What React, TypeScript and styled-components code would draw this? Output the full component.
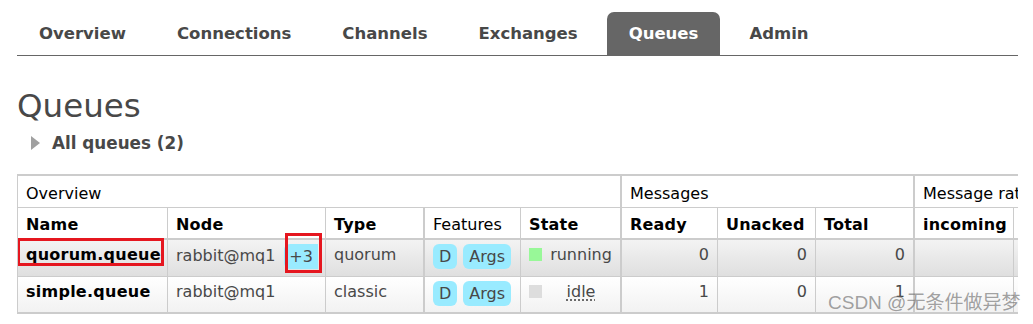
import styled, { createGlobalStyle } from 'styled-components'

const GlobalStyle = createGlobalStyle`
  body {
    margin: 0;
    background: #fff;
    font-family: "DejaVu Sans", Verdana, sans-serif;
    color: #484848;
  }
`

const Page = styled.div`
  position: relative;
  width: 1001px;
  padding: 12px 0 0 17px;
`

const Tabs = styled.nav`
  display: flex;
  gap: 7px;
  height: 43px;
  border-bottom: 1px solid #666;
`

const Tab = styled.a<{ $active?: boolean }>`
  padding: 0 22px;
  line-height: 44px;
  font-size: 16.5px;
  font-weight: bold;
  color: ${(p) => (p.$active ? '#fff' : '#484848')};
  background: ${(p) => (p.$active ? '#666' : 'transparent')};
  border-radius: 7px 7px 0 0;
`

const Title = styled.h1`
  margin: 30px 0 0;
  font-size: 32.5px;
  line-height: 40px;
  font-weight: normal;
  color: #484848;
`

const Toggle = styled.div`
  display: flex;
  align-items: center;
  gap: 12px;
  margin: 7px 0 0 14px;
  font-size: 16.8px;
  line-height: 20px;
  font-weight: bold;
  color: #484848;
`

const Arrow = styled.span`
  width: 0;
  height: 0;
  border-left: 9px solid #a0a0a0;
  border-top: 7px solid transparent;
  border-bottom: 7px solid transparent;
`

const Table = styled.div`
  margin-top: 21px;
  width: 1000px;
  overflow: hidden;
  border-top: 2px solid #ccc;
  border-bottom: 2px solid #ccc;
  border-left: 1px solid #ccc;
`

const COLS = '149px 158px 98px 97px 100px 97px 98px 98px 100px 100px'

type Kind = 'group' | 'head' | 'odd' | 'even'

const rowHeight: Record<Kind, number> = { group: 32, head: 32, odd: 37, even: 35 }
const rowBg: Record<Kind, string> = {
  group: '#fff',
  head: '#fff',
  odd: 'linear-gradient(#f3f3f3, #dfdfdf)',
  even: 'linear-gradient(#fff, #f2f2f2)',
}
const rowBorder: Record<Kind, string> = {
  group: '1px solid #ccc',
  head: '2px solid #ccc',
  odd: '1px solid #ccc',
  even: 'none',
}
const rowPad: Record<Kind, number> = { group: 7, head: 6, odd: 4, even: 4 }

const Row = styled.div<{ $kind: Kind }>`
  display: grid;
  grid-template-columns: ${COLS};
  width: 1095px;
  box-sizing: border-box;
  height: ${(p) => rowHeight[p.$kind]}px;
  background: ${(p) => rowBg[p.$kind]};
  border-bottom: ${(p) => rowBorder[p.$kind]};
  font-size: 16px;
  line-height: 21px;
  color: ${(p) => (p.$kind === 'group' || p.$kind === 'head' ? '#000' : '#484848')};
  font-weight: ${(p) => (p.$kind === 'head' ? 'bold' : 'normal')};
  letter-spacing: ${(p) => (p.$kind === 'head' ? '0.2px' : '0')};

  & > * {
    padding-top: ${(p) => rowPad[p.$kind]}px;
  }
`

const Cell = styled.div<{ $edge?: 0 | 1 | 2; $span?: number; $right?: boolean; $plain?: boolean }>`
  position: relative;
  box-sizing: border-box;
  padding-left: 8px;
  padding-right: 8px;
  white-space: nowrap;
  border-left: ${(p) => (p.$edge === 0 ? 'none' : `${p.$edge ?? 1}px solid #ccc`)};
  grid-column: span ${(p) => p.$span ?? 1};
  text-align: ${(p) => (p.$right ? 'right' : 'left')};
  ${(p) => (p.$plain ? 'font-weight: normal; letter-spacing: 0;' : '')}
`

const Name = styled.span`
  position: relative;
  display: inline-block;
  font-weight: bold;
  letter-spacing: 0.25px;
  color: #000;
`

const Pill = styled.span`
  position: relative;
  display: inline-block;
  vertical-align: -1px;
  padding: 0 6px;
  margin-right: 6px;
  line-height: 25px;
  border-radius: 6px;
  background: #99ebff;
  color: #484848;
`

const More = styled(Pill)`
  margin-left: 9px;
  padding: 0 5px;
  border-radius: 6px 0 0 6px;
`

const Mark = styled.span<{ $l: number; $r: number; $t: number; $b: number }>`
  position: absolute;
  left: ${(p) => p.$l}px;
  right: ${(p) => p.$r}px;
  top: ${(p) => p.$t}px;
  bottom: ${(p) => p.$b}px;
  border: 3px solid #e5161f;
  pointer-events: none;
`

const Status = styled.span<{ $on?: boolean }>`
  display: inline-block;
  width: 13px;
  height: 13px;
  vertical-align: -1px;
  background: ${(p) => (p.$on ? '#98f898' : '#ddd')};
`

const StatusText = styled.span<{ $dotted?: boolean }>`
  display: inline-block;
  box-sizing: border-box;
  width: calc(100% - 13px);
  padding-left: 8px;
  text-align: center;
  ${(p) => (p.$dotted ? 'text-decoration: underline dotted; text-underline-offset: 3px;' : '')}
`

const Watermark = styled.div`
  position: absolute;
  left: 828px;
  top: 292px;
  font-family: "Liberation Sans", "Noto Sans CJK SC", sans-serif;
  font-size: 19px;
  line-height: 22px;
  color: rgba(110, 110, 110, 0.65);
  white-space: nowrap;
`

const tabs = ['Overview', 'Connections', 'Channels', 'Exchanges', 'Queues', 'Admin']

const queues = [
  { name: 'quorum.queue', node: 'rabbit@mq1', more: '+3', type: 'quorum', running: true, ready: 0, unacked: 0, total: 0 },
  { name: 'simple.queue', node: 'rabbit@mq1', type: 'classic', running: false, ready: 1, unacked: 0, total: 1 },
]

export default function App() {
  return (
    <Page>
      <GlobalStyle />
      <Tabs>
        {tabs.map((t) => (
          <Tab key={t} $active={t === 'Queues'}>
            {t}
          </Tab>
        ))}
      </Tabs>

      <Title>Queues</Title>
      <Toggle>
        <Arrow />
        All queues (2)
      </Toggle>

      <Table>
        <Row $kind="group">
          <Cell $edge={0} $span={5}>Overview</Cell>
          <Cell $edge={2} $span={3}>Messages</Cell>
          <Cell $edge={2} $span={2}>Message rates</Cell>
        </Row>
        <Row $kind="head">
          <Cell $edge={0}>Name</Cell>
          <Cell>Node</Cell>
          <Cell>Type</Cell>
          <Cell $edge={2} $plain>Features</Cell>
          <Cell>State</Cell>
          <Cell $edge={2}>Ready</Cell>
          <Cell>Unacked</Cell>
          <Cell>Total</Cell>
          <Cell $edge={2}>incoming</Cell>
          <Cell />
        </Row>
        {queues.map((q, i) => (
          <Row key={q.name} $kind={i % 2 === 0 ? 'odd' : 'even'}>
            <Cell $edge={0}>
              <Name>
                {q.name}
                {i === 0 && <Mark $l={-9} $r={-3} $t={-6} $b={-1} />}
              </Name>
            </Cell>
            <Cell>
              {q.node}
              {q.more && (
                <More>
                  {q.more}
                  <Mark $l={1} $r={-4} $t={-11} $b={-4} />
                </More>
              )}
            </Cell>
            <Cell>{q.type}</Cell>
            <Cell $edge={2}>
              <Pill>D</Pill>
              <Pill>Args</Pill>
            </Cell>
            <Cell>
              <Status $on={q.running} />
              <StatusText $dotted={!q.running}>{q.running ? 'running' : 'idle'}</StatusText>
            </Cell>
            <Cell $edge={2} $right>{q.ready}</Cell>
            <Cell $right>{q.unacked}</Cell>
            <Cell $right>{q.total}</Cell>
            <Cell $edge={2} />
            <Cell />
          </Row>
        ))}
      </Table>

      <Watermark>CSDN @无条件做异梦</Watermark>
    </Page>
  )
}
